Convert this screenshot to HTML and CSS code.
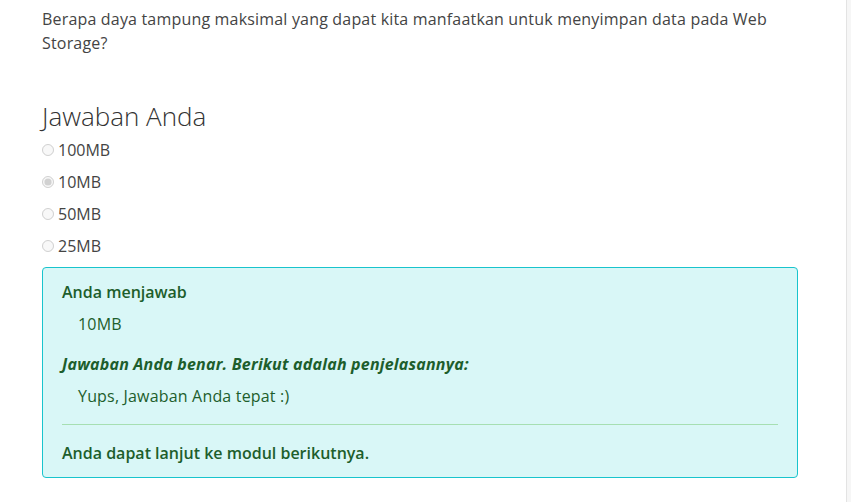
FILE: index.html
```html
<!DOCTYPE html>
<html lang="en">
<head>
    <meta charset="UTF-8">
    <meta name="viewport" content="width=device-width, initial-scale=1.0">
    <title>Kuis</title>
    <link rel="stylesheet" href="styles.css">
</head>
<body>
    <div class="page">
        <p class="question">Berapa daya tampung maksimal yang dapat kita manfaatkan untuk menyimpan data pada Web Storage?</p>

        <h3 class="answer-title">Jawaban Anda</h3>
        <div class="options">
            <label class="option"><input type="radio" name="jawaban" disabled> 100MB</label>
            <label class="option"><input type="radio" name="jawaban" checked disabled> 10MB</label>
            <label class="option"><input type="radio" name="jawaban" disabled> 50MB</label>
            <label class="option"><input type="radio" name="jawaban" disabled> 25MB</label>
        </div>

        <div class="result">
            <p class="result-label">Anda menjawab</p>
            <p class="result-value">10MB</p>
            <p class="result-label result-italic">Jawaban Anda benar. Berikut adalah penjelasannya:</p>
            <p class="result-value">Yups, Jawaban Anda tepat :)</p>
            <hr>
            <p class="result-label">Anda dapat lanjut ke modul berikutnya.</p>
        </div>
    </div>
</body>
</html>
```

FILE: styles.css
```css
body {
    margin: 0;
    background-color: #f6f6f6;
    font-family: "Open Sans", sans-serif;
    color: #444;
}
.page {
    width: 756px;
    min-height: 502px;
    padding: 7px 48px 0 42px;
    box-sizing: content-box;
    background-color: #fff;
    border-right: 1px solid #e3e3e3;
}
.question {
    margin: 0;
    font-size: 16px;
    line-height: 24px;
    letter-spacing: 0.18px;
}
.answer-title {
    margin: 43px 0 0;
    font-size: 26px;
    font-weight: 300;
    line-height: 36px;
    color: #333;
}
.options {
    display: flex;
    flex-direction: column;
}
.option {
    display: flex;
    align-items: center;
    height: 32px;
    font-size: 16px;
}
.option input {
    width: 12px;
    height: 12px;
    margin: 0 4px 0 0;
}
.result {
    margin-top: 5px;
    padding: 12px 19px 12px;
    background-color: #d9f7f7;
    border: 1px solid #19c4cd;
    border-radius: 4px;
    color: #1d5e2c;
}
.result p {
    margin: 0;
    font-size: 16px;
    line-height: 24px;
}
.result-label {
    font-weight: 600;
}
.result-italic {
    font-style: italic;
    font-weight: 700;
    letter-spacing: 0.2px;
}
.result-value {
    padding: 8px 16px 16px;
    letter-spacing: 0.18px;
}
.result hr {
    margin: 0 0 16px;
    border: 0;
    border-top: 1px solid #a6dfb2;
}
```
